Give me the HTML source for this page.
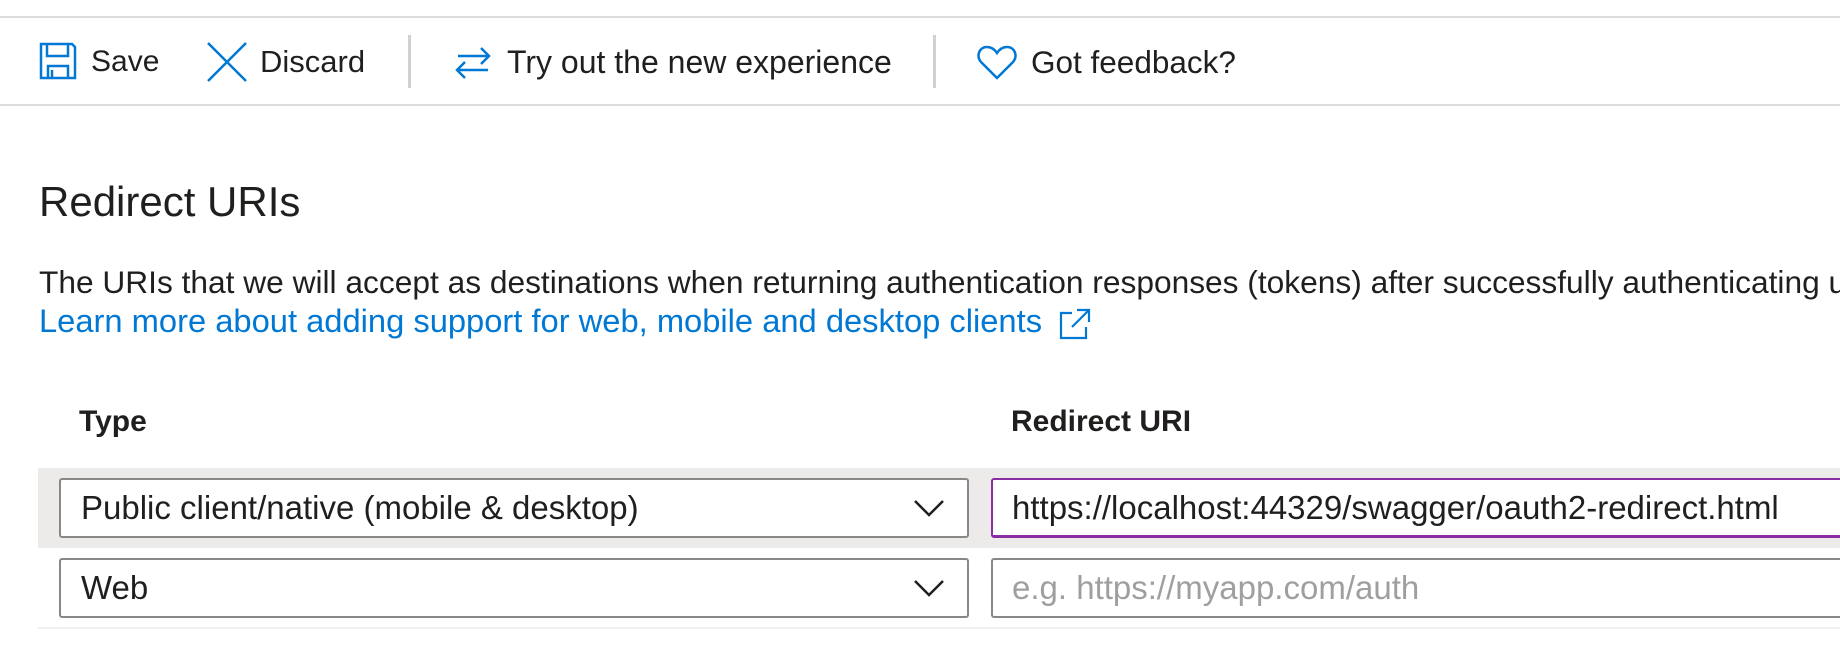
<!DOCTYPE html>
<html><head><meta charset="utf-8"><style>
html,body{margin:0;padding:0;background:#fff;width:1840px;height:672px;overflow:hidden;font-family:"Liberation Sans",sans-serif;color:#201f1e}
.a{position:absolute;white-space:nowrap}
.t{font-size:29px;line-height:34px}
</style></head><body>
<div class="a" style="left:0;top:16px;width:1840px;height:2px;background:#dcdcdc"></div>
<div class="a" style="left:0;top:104px;width:1840px;height:2px;background:#dcdcdc"></div>
<svg class="a" style="left:39px;top:42px" width="38" height="38" viewBox="0 0 38 38" fill="none" stroke="#0078d4" stroke-width="2.5"><path d="M2 2H33L36 5V36H2Z"/><path d="M8 2V14H29V2"/><path d="M9 36V24H29V36"/><path d="M13 28V36"/></svg>
<div class="a t" style="left:91px;top:45px;font-size:30px">Save</div>
<svg class="a" style="left:206px;top:42px" width="42" height="40" viewBox="0 0 42 40" stroke="#0078d4" stroke-width="2.5"><path d="M2 1L40 39M40 1L2 39"/></svg>
<div class="a t" style="left:260px;top:45px;font-size:31px">Discard</div>
<div class="a" style="left:408px;top:35px;width:3px;height:53px;background:#d0d0d0"></div>
<svg class="a" style="left:454px;top:44px" width="38" height="38" viewBox="0 0 38 38" fill="none" stroke="#0078d4" stroke-width="2.5"><path d="M4 12H35M27 4L35 12L27 20"/><path d="M34 26H3M11 18L3 26L11 34"/></svg>
<div class="a t" style="left:507px;top:45px;font-size:32px">Try out the new experience</div>
<div class="a" style="left:933px;top:35px;width:3px;height:53px;background:#d0d0d0"></div>
<svg class="a" style="left:977px;top:44px" width="40" height="36" viewBox="0 0 40 36" fill="none" stroke="#0078d4" stroke-width="2.5"><path d="M20 34L4 18C-1 12 2 3 10 3C15 3 18 6 20 9C22 6 25 3 30 3C38 3 41 12 36 18Z"/></svg>
<div class="a t" style="left:1031px;top:45px;font-size:31.5px">Got feedback?</div>

<div class="a" style="left:39px;top:179px;font-size:42px;line-height:46px">Redirect URIs</div>
<div class="a t" style="left:39px;top:265px;font-size:31.7px">The URIs that we will accept as destinations when returning authentication responses (tokens) after successfully authenticating users.</div>
<div class="a t" style="left:39px;top:304px;font-size:32.7px;color:#0078d4">Learn more about adding support for web, mobile and desktop clients</div>
<svg class="a" style="left:1058px;top:307px" width="34" height="34" viewBox="0 0 34 34" fill="none" stroke="#0078d4" stroke-width="2.2"><path d="M14 6H3V31H28V20"/><path d="M19 3H31V15M31 3L14 20"/></svg>

<div class="a t" style="left:79px;top:405px;font-weight:bold;font-size:30px">Type</div>
<div class="a t" style="left:1011px;top:405px;font-weight:bold;font-size:30px">Redirect URI</div>

<div class="a" style="left:38px;top:468px;width:1802px;height:80px;background:#edebe9"></div>
<div class="a" style="left:59px;top:478px;width:906px;height:56px;background:#fff;border:2px solid #8a8886;border-radius:3px"></div>
<div class="a t" style="left:81px;top:491px;font-size:33px">Public client/native (mobile &amp; desktop)</div>
<svg class="a" style="left:913px;top:498px" width="32" height="20" viewBox="0 0 32 20" fill="none" stroke="#201f1e" stroke-width="2.5"><path d="M2 3L16 17L30 3"/></svg>
<div class="a" style="left:991px;top:478px;width:860px;height:55px;background:#fff;border:2px solid #8a2da5;border-bottom-width:3px;border-radius:3px"></div>
<div class="a t" style="left:1012px;top:491px;font-size:33px">https://localhost:44329/swagger/oauth2-redirect.html</div>

<div class="a" style="left:59px;top:558px;width:906px;height:56px;background:#fff;border:2px solid #8a8886;border-radius:3px"></div>
<div class="a t" style="left:81px;top:571px;font-size:33px">Web</div>
<svg class="a" style="left:913px;top:578px" width="32" height="20" viewBox="0 0 32 20" fill="none" stroke="#201f1e" stroke-width="2.5"><path d="M2 3L16 17L30 3"/></svg>
<div class="a" style="left:991px;top:558px;width:860px;height:56px;background:#fff;border:2px solid #8a8886;border-radius:3px"></div>
<div class="a t" style="left:1012px;top:571px;font-size:33px;color:#a19f9d">e.g. https://myapp.com/auth</div>
<div class="a" style="left:38px;top:627px;width:1802px;height:2px;background:#f0f0f0"></div>
</body></html>
